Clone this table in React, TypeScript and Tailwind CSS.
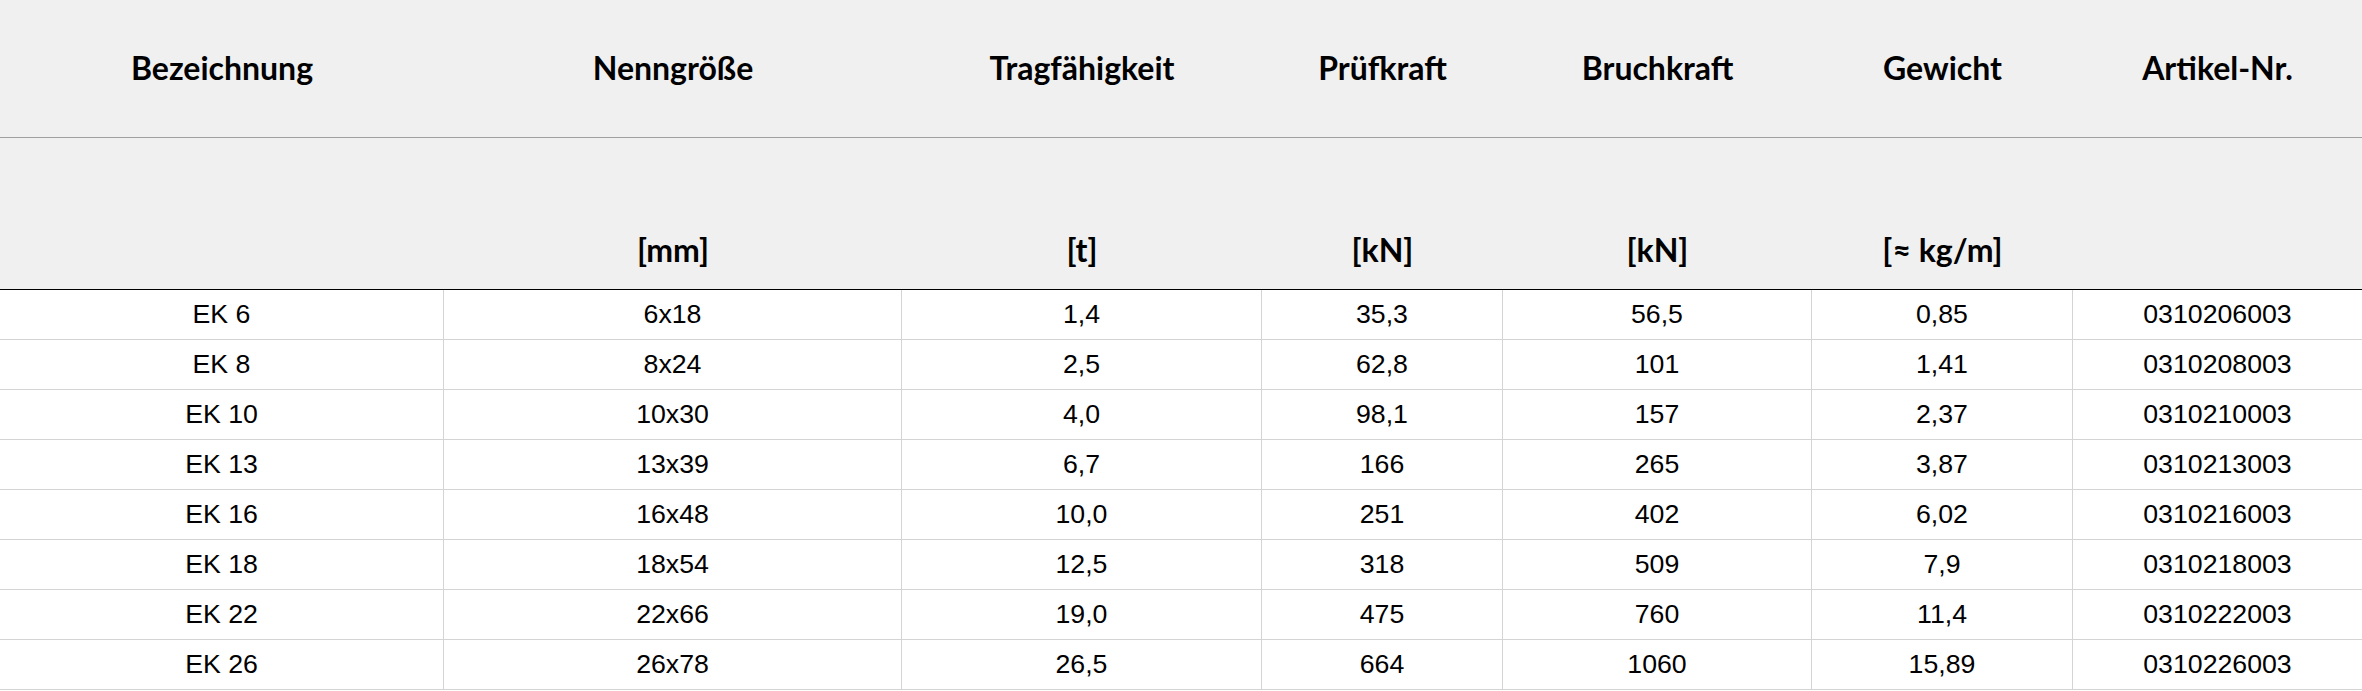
const columns = [
  { title: 'Bezeichnung', unit: '' },
  { title: 'Nenngröße', unit: '[mm]' },
  { title: 'Tragfähigkeit', unit: '[t]' },
  { title: 'Prüfkraft', unit: '[kN]' },
  { title: 'Bruchkraft', unit: '[kN]' },
  { title: 'Gewicht', unit: '[≈ kg/m]' },
  { title: 'Artikel-Nr.', unit: '' },
];

const rows = [
  ['EK 6', '6x18', '1,4', '35,3', '56,5', '0,85', '0310206003'],
  ['EK 8', '8x24', '2,5', '62,8', '101', '1,41', '0310208003'],
  ['EK 10', '10x30', '4,0', '98,1', '157', '2,37', '0310210003'],
  ['EK 13', '13x39', '6,7', '166', '265', '3,87', '0310213003'],
  ['EK 16', '16x48', '10,0', '251', '402', '6,02', '0310216003'],
  ['EK 18', '18x54', '12,5', '318', '509', '7,9', '0310218003'],
  ['EK 22', '22x66', '19,0', '475', '760', '11,4', '0310222003'],
  ['EK 26', '26x78', '26,5', '664', '1060', '15,89', '0310226003'],
];

const grid = 'grid grid-cols-[444px_458px_360px_241px_309px_261px_289px]';

export default function App() {
  return (
    <div className="w-[2362px] h-[691px] overflow-hidden bg-white text-black">
      {/* Header - titles */}
      <div className={`${grid} h-[138px] bg-[#f0f0f0] border-b border-[#a0a0a0] font-['Lato',sans-serif] font-bold text-[32px]`}>
        {columns.map((c) => (
          <div key={c.title} className="flex items-center justify-center pb-[1px]">
            {c.title}
          </div>
        ))}
      </div>

      {/* Header - units */}
      <div className={`${grid} h-[152px] bg-[#f0f0f0] border-b border-black font-['Lato',sans-serif] font-bold text-[32px]`}>
        {columns.map((c) => (
          <div key={c.title} className="flex items-end justify-center pb-[20px] leading-[38px]">
            {c.unit}
          </div>
        ))}
      </div>

      {/* Data rows */}
      {rows.map((r) => (
        <div key={r[0]} className={`${grid} h-[50px] border-b border-[#d4d4d4] font-['Liberation_Sans',Arial,sans-serif] text-[26.7px]`}>
          {r.map((v, i) => (
            <div
              key={i}
              className={`flex items-center justify-center ${i < r.length - 1 ? 'border-r border-[#d4d4d4]' : ''}`}
            >
              {v}
            </div>
          ))}
        </div>
      ))}
    </div>
  );
}
